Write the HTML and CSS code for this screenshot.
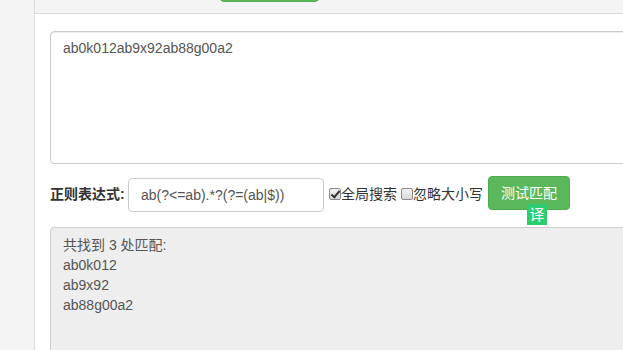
FILE: index.html
```html
<!DOCTYPE html>
<html lang="zh-CN">
<head>
<meta charset="utf-8">
<title>正则表达式测试</title>
<link rel="stylesheet" href="styles.css">
</head>
<body>
<div class="page">
  <aside class="sidebar"></aside>
  <main class="main">
    <div class="topbar">
      <button class="top-btn" type="button" aria-label="测试"></button>
    </div>
    <div class="content">
      <textarea class="source">ab0k012ab9x92ab88g00a2</textarea>
      <div class="regex-row">
        <label class="regex-label">正则表达式:</label>
        <input class="regex-input" type="text" value="ab(?&lt;=ab).*?(?=(ab|$))">
        <label class="opt"><input type="checkbox" checked>全局搜索</label>
        <label class="opt"><input type="checkbox">忽略大小写</label>
        <div class="btn-wrap">
          <button class="btn-match" type="button">测试匹配</button>
          <span class="badge">译</span>
        </div>
      </div>
      <div class="result">
        <div>共找到 3 处匹配:</div>
        <div>ab0k012</div>
        <div>ab9x92</div>
        <div>ab88g00a2</div>
      </div>
    </div>
  </main>
</div>
</body>
</html>
```
FILE: styles.css
```css
html, body {
  margin: 0;
  padding: 0;
  height: 100%;
  overflow: hidden;
  background: #fff;
  font-family: "Liberation Sans", "Noto Sans CJK SC", sans-serif;
  font-size: 14px;
  color: #555;
}
.page {
  display: flex;
  height: 350px;
}
.sidebar {
  width: 34px;
  flex: none;
  background: #f4f4f4;
  border-right: 1px solid #dcdcdc;
}
.main {
  flex: 1;
  overflow: hidden;
  min-width: 0;
}
.topbar {
  height: 13px;
  background: #f4f4f4;
  border-bottom: 1px solid #d9d9d9;
  display: flex;
  align-items: flex-end;
  overflow: hidden;
}
.top-btn {
  margin: 0 0 11px 185px;
  width: 99px;
  height: 30px;
  border: 1px solid #4cae4c;
  border-radius: 4px;
  background: #5cb85c;
  flex: none;
  padding: 0;
}
.content {
  padding: 17px 0 0 15px;
}
.source {
  display: block;
  box-sizing: border-box;
  width: 640px;
  height: 133px;
  margin: 0;
  padding: 6px 12px;
  border: 1px solid #ccc;
  border-radius: 4px;
  font-family: "Liberation Sans", "Noto Sans CJK SC", sans-serif;
  font-size: 14px;
  line-height: 20px;
  color: #555;
  resize: none;
  box-shadow: inset 0 1px 1px rgba(0,0,0,.075);
}
.regex-row {
  display: flex;
  align-items: flex-start;
  margin-top: 12px;
  white-space: nowrap;
}
.regex-label {
  font-weight: bold;
  color: #333;
  line-height: 20px;
  margin-top: 8px;
  width: 78px;
  flex: none;
}
.regex-input {
  box-sizing: border-box;
  width: 196px;
  height: 34px;
  margin: 2px 0 0 0;
  padding: 6px 12px;
  border: 1px solid #ccc;
  border-radius: 4px;
  font-family: "Liberation Sans", "Noto Sans CJK SC", sans-serif;
  font-size: 14px;
  color: #555;
  flex: none;
}
.opt {
  display: flex;
  align-items: center;
  color: #333;
  line-height: 20px;
  margin-top: 8px;
  margin-left: 5px;
}
.opt + .opt {
  margin-left: 4px;
}
.opt input {
  -webkit-appearance: none;
  appearance: none;
  box-sizing: border-box;
  margin: 0;
  width: 12px;
  height: 12px;
  border: 1px solid #8a8a8a;
  border-radius: 2px;
  background: linear-gradient(#f2f2f2, #d8d8d8);
  position: relative;
}
.opt input:checked::after {
  content: "";
  position: absolute;
  left: 3px;
  top: 0px;
  width: 3px;
  height: 7px;
  border: solid #333;
  border-width: 0 2px 2px 0;
  transform: rotate(40deg);
}
.btn-wrap {
  position: relative;
  margin-left: 5px;
}
.btn-match {
  box-sizing: border-box;
  width: 82px;
  height: 34px;
  padding: 6px 12px;
  border: 1px solid #4cae4c;
  border-radius: 4px;
  background: #5cb85c;
  color: #fff;
  font-family: "Liberation Sans", "Noto Sans CJK SC", sans-serif;
  font-size: 14px;
  line-height: 20px;
}
.badge {
  position: absolute;
  left: 39px;
  top: 28px;
  width: 20px;
  height: 21px;
  background: #2ecc71;
  color: #fff;
  font-size: 15px;
  line-height: 21px;
  text-align: center;
}
.result {
  box-sizing: border-box;
  width: 640px;
  height: 140px;
  margin-top: 15px;
  padding: 7px 12px;
  background: #eee;
  border: 1px solid #ccc;
  border-radius: 4px;
  line-height: 20px;
  color: #555;
}
```
